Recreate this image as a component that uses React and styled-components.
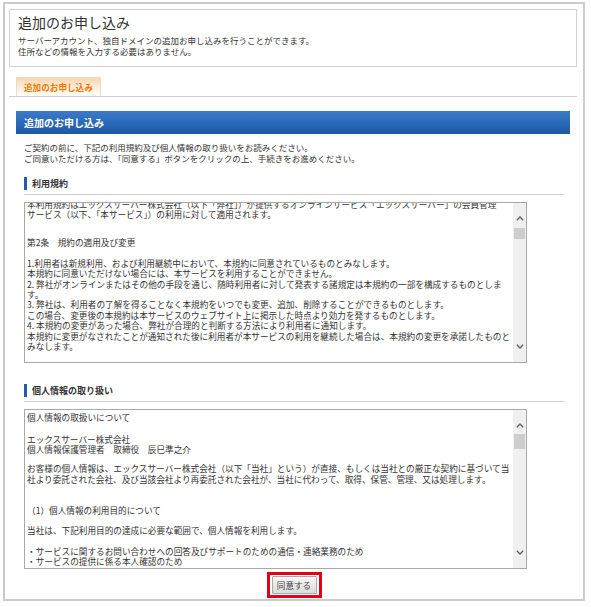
import React, { useLayoutEffect, useRef } from "react";
import styled, { createGlobalStyle } from "styled-components";

const Global = createGlobalStyle`
  html, body { margin: 0; padding: 0; background: #fff; }
  body { font-family: "Noto Sans CJK JP", "Noto Sans", sans-serif; color: #333; }
  * { box-sizing: border-box; }
`;

const Frame = styled.div`
  width: 582px;
  margin: 2px 0 0 3px;
  border: 2px solid #cbcbcb;
  padding: 5px 6px 1px 4px;
`;

const TitleBox = styled.section`
  border: 1px solid #d2d2d2;
  padding: 3px 8px 9px;
`;

const Title = styled.h1`
  margin: 0;
  font-size: 14px;
  line-height: 18px;
  font-weight: normal;
  color: #333;
`;

const SubText = styled.p`
  margin: 4px 0 0;
  font-size: 8.5px;
  line-height: 11px;
  color: #333;
`;

const Panel = styled.div`
  padding: 0 7px;
`;

const TabStrip = styled.div`
  display: flex;
  margin: 10px -7px 0;
  padding-left: 7px;
  border-bottom: 1px solid #d0d0d0;
`;

const Tab = styled.div`
  height: 19px;
  padding: 0 7px;
  border: 1px solid #e6dcd2;
  border-bottom: none;
  background: linear-gradient(#fbd6ae, #fdeedd 55%, #ffffff);
  color: #f07a00;
  font-size: 8.6px;
  font-weight: bold;
  line-height: 19px;
  white-space: nowrap;
`;

const BlueHeader = styled.h2`
  margin: 14px 0 0;
  height: 23px;
  padding: 0 8px;
  background: linear-gradient(#3a7bc9, #1d58a4);
  color: #fff;
  font-size: 10px;
  font-weight: bold;
  line-height: 23px;
`;

const Body = styled.div`
  padding: 0 6px 0 8px;
`;

const Intro = styled.div`
  margin-top: 8px;
  font-size: 8.5px;
  line-height: 11px;
  color: #333;
`;

const SectionHead = styled.h3`
  margin: ${(p) => p.$top}px 0 0;
  padding: 3px 0 4px;
  border-bottom: 1px solid #d0d0d0;
  font-size: 9px;
  font-weight: bold;
  color: #333;
  line-height: 13px;
`;

const HeadLabel = styled.span`
  display: block;
  border-left: 3px solid #1f5ea8;
  padding-left: 5px;
`;

const TextBox = styled.div`
  display: flex;
  width: 503px;
  height: ${(p) => p.$h}px;
  margin-top: 7px;
  border: 1px solid #a8a8a8;
  background: #fff;
`;

const TextScroll = styled.div`
  flex: 1;
  overflow: hidden;
  padding: 2px 2px 0;
  font-size: 8.65px;
  line-height: 10.4px;
  color: #333;
`;

const Line = styled.div`
  white-space: nowrap;
`;

const Gap = styled.div`
  height: ${(p) => p.$h}px;
`;

const ScrollTrack = styled.div`
  width: 13px;
  display: flex;
  flex-direction: column;
  background: #f0f0f0;
`;

const ArrowSlot = styled.div`
  height: 22px;
  display: flex;
  justify-content: center;
  align-items: ${(p) => (p.$down ? "flex-end" : "flex-start")};
  padding: ${(p) => (p.$down ? "0 0 13px" : "13px 0 0")};
`;

const TrackFill = styled.div`
  flex: 1;
  display: flex;
  flex-direction: column;
  padding: 0 1px;
`;

const Thumb = styled.div`
  margin-top: ${(p) => p.$offset}px;
  height: ${(p) => p.$size}px;
  background: #cdcdcd;
`;

const ButtonRow = styled.div`
  display: flex;
  justify-content: center;
  margin-top: 3px;
`;

const Highlight = styled.div`
  display: flex;
  border: 3px solid #e50012;
  padding: 1px 2px;
`;

const AgreeButton = styled.button`
  display: block;
  height: 18px;
  width: 45px;
  padding: 0;
  border: 1px solid #a9a9a9;
  border-radius: 1px;
  background: linear-gradient(#f6f6f6, #dcdcdc);
  color: #444;
  font-family: "Noto Sans CJK JP", sans-serif;
  font-size: 8.6px;
  line-height: 16px;
  cursor: pointer;
`;

const Chevron = ({ down }) => (
  <svg width="8" height="5" viewBox="0 0 8 5">
    <path
      d={down ? "M0.8 0.8 L4 4 L7.2 0.8" : "M0.8 4.2 L4 1 L7.2 4.2"}
      fill="none"
      stroke="#606060"
      strokeWidth="1.3"
    />
  </svg>
);

const ScrollBox = ({ height, scroll, thumbOffset, thumbSize, children }) => {
  const ref = useRef(null);
  useLayoutEffect(() => {
    if (ref.current) ref.current.scrollTop = scroll;
  }, [scroll]);
  return (
    <TextBox $h={height}>
      <TextScroll ref={ref}>
        {children}
        <Gap $h={30} />
      </TextScroll>
      <ScrollTrack>
        <ArrowSlot>
          <Chevron />
        </ArrowSlot>
        <TrackFill>
          <Thumb $offset={thumbOffset} $size={thumbSize} />
        </TrackFill>
        <ArrowSlot $down>
          <Chevron down />
        </ArrowSlot>
      </ScrollTrack>
    </TextBox>
  );
};

export default function App() {
  return (
    <>
      <Global />
      <Frame>
        <TitleBox>
          <Title>追加のお申し込み</Title>
          <SubText>
            サーバーアカウント、独自ドメインの追加お申し込みを行うことができます。
            <br />
            住所などの情報を入力する必要はありません。
          </SubText>
        </TitleBox>
        <Panel>
          <TabStrip>
            <Tab>追加のお申し込み</Tab>
          </TabStrip>
          <BlueHeader>追加のお申し込み</BlueHeader>
          <Body>
            <Intro>
              ご契約の前に、下記の利用規約及び個人情報の取り扱いをお読みください。
              <br />
              ご同意いただける方は、「同意する」ボタンをクリックの上、手続きをお進めください。
            </Intro>

            <SectionHead $top={10}>
              <HeadLabel>利用規約</HeadLabel>
            </SectionHead>
            <ScrollBox height={161} scroll={6} thumbOffset={3} thumbSize={11}>
              <Line>本利用規約はエックスサーバー株式会社（以下「弊社」）が提供するオンラインサービス「エックスサーバー」の会員管理</Line>
              <Line>サービス（以下、「本サービス」）の利用に対して適用されます。</Line>
              <Gap $h={17} />
              <Line>第2条　規約の適用及び変更</Line>
              <Gap $h={10.6} />
              <Line>1.利用者は新規利用、および利用継続中において、本規約に同意されているものとみなします。</Line>
              <Line>本規約に同意いただけない場合には、本サービスを利用することができません。</Line>
              <Line>2. 弊社がオンラインまたはその他の手段を通じ、随時利用者に対して発表する諸規定は本規約の一部を構成するものとしま</Line>
              <Line>す。</Line>
              <Line>3. 弊社は、利用者の了解を得ることなく本規約をいつでも変更、追加、削除することができるものとします。</Line>
              <Line>この場合、変更後の本規約は本サービスのウェブサイト上に掲示した時点より効力を発するものとします。</Line>
              <Line>4. 本規約の変更があった場合、弊社が合理的と判断する方法により利用者に通知します。</Line>
              <Line>本規約に変更がなされたことが通知された後に利用者が本サービスの利用を継続した場合は、本規約の変更を承諾したものと</Line>
              <Line>みなします。</Line>
            </ScrollBox>

            <SectionHead $top={18}>
              <HeadLabel>個人情報の取り扱い</HeadLabel>
            </SectionHead>
            <ScrollBox height={160} scroll={0} thumbOffset={2} thumbSize={15}>
              <Line>個人情報の取扱いについて</Line>
              <Gap $h={11.6} />
              <Line>エックスサーバー株式会社</Line>
              <Line>個人情報保護管理者　取締役　辰巳準之介</Line>
              <Gap $h={8.6} />
              <Line>お客様の個人情報は、エックスサーバー株式会社（以下「当社」という）が直接、もしくは当社との厳正な契約に基づいて当</Line>
              <Line>社より委託された会社、及び当該会社より再委託された会社が、当社に代わって、取得、保管、管理、又は処理します。</Line>
              <Gap $h={20.6} />
              <Line>（1）個人情報の利用目的について</Line>
              <Gap $h={9.6} />
              <Line>当社は、下記利用目的の達成に必要な範囲で、個人情報を利用します。</Line>
              <Gap $h={10.6} />
              <Line>・サービスに関するお問い合わせへの回答及びサポートのための通信・連絡業務のため</Line>
              <Line>・サービスの提供に係る本人確認のため</Line>
            </ScrollBox>

            <ButtonRow>
              <Highlight>
                <AgreeButton type="button">同意する</AgreeButton>
              </Highlight>
            </ButtonRow>
          </Body>
        </Panel>
      </Frame>
    </>
  );
}
